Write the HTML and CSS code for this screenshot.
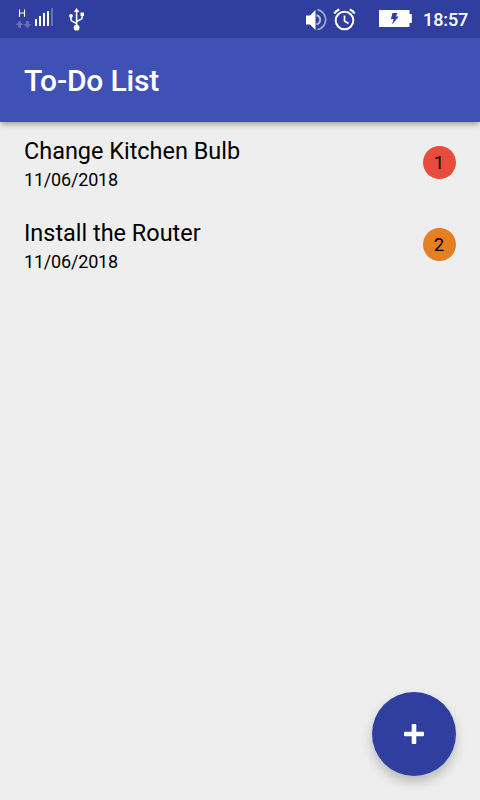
FILE: index.html
```html
<!DOCTYPE html>
<html lang="en">
<head>
<meta charset="utf-8">
<title>To-Do List</title>
<link rel="stylesheet" href="styles.css">
</head>
<body>
<div class="status">
  <svg class="signals" width="84" height="38" viewBox="0 0 84 38">
    <path d="M19.500 9.500v7.500M24.500 9.500v7.500M19.500 13h5" stroke="#fff" stroke-width="1.100" fill="none"/>
    <path d="M19.500 20.500l3.800 4.500h-2.300v3h-3v-3h-2.300zM27.300 28.500l-3.800-4.500h2.300v-3h3v3h2.300z" fill="#6570bb"/>
    <path d="M35 19h2v7h-2zM39 16h2v10h-2zM43 13h2v13h-2zM47 11h2v15h-2z" fill="#fff"/>
    <path d="M51 8h2v18h-2z" fill="#6570bb"/>
    <path d="M76.600 11v16M71 16v3.500q0 1 1 1.600l4.600 2.400M82.200 14.500v3q0 1-1 1.600l-4.600 2.400" stroke="#fff" stroke-width="1.600" fill="none"/>
    <path d="M76.600 8l2.800 4h-5.600zM80.500 12.500h3.500v3.500h-3.500z" fill="#fff"/>
    <circle cx="71" cy="15.800" r="1.900" fill="#fff"/><circle cx="76.600" cy="27.700" r="2.900" fill="#fff"/>
  </svg>
  <svg class="alerts" width="108" height="38" viewBox="305 0 108 38">
    <path d="M306 15.500h4l5.500-5.500v20l-5.500-5.500h-4z" fill="#fff"/>
    <path d="M316.500 15.200a4.800 4.800 0 0 1 0 9.300" fill="none" stroke="#b4bae0" stroke-width="2"/>
    <path d="M317.500 9.700a10.200 10.200 0 0 1 0 20" fill="none" stroke="#a4abd7" stroke-width="1.700"/>
    <circle cx="344.500" cy="20.500" r="8.800" fill="none" stroke="#fff" stroke-width="2"/>
    <path d="M344.500 15.500v5.500l4 2.500" fill="none" stroke="#fff" stroke-width="1.700"/>
    <path d="M334.300 13.500q1.500-2.500 5-3.900M349.700 9.600q3.500 1.400 5 3.900" stroke="#fff" stroke-width="2.200" fill="none"/>
    <path d="M379 10h30.500v4h2.300v9h-2.300v4H379z" fill="#fff"/>
    <path d="M392.500 13h5l-1.500 3.500h2.800l-6.800 8 1.600-5.500h-2.800z" fill="#303f9f"/>
  </svg>
  <span class="clock">18:57</span>
</div>
<header class="appbar"><h1>To-Do List</h1></header>
<main class="list">
  <div class="item">
    <div class="text"><div class="name">Change Kitchen Bulb</div><div class="date">11/06/2018</div></div>
    <span class="badge high">1</span>
  </div>
  <div class="item">
    <div class="text"><div class="name">Install the Router</div><div class="date">11/06/2018</div></div>
    <span class="badge medium">2</span>
  </div>
</main>
<button class="fab" aria-label="Add">
  <svg width="20" height="20" viewBox="0 0 20 20"><rect x="7.700" width="4.600" height="20" rx="1" fill="#fff"/><rect y="7.700" width="20" height="4.600" rx="1" fill="#fff"/></svg>
</button>
</body>
</html>
```
FILE: styles.css
```css
* { box-sizing: border-box; }
body {
  margin: 0;
  height: 800px;
  display: flex;
  flex-direction: column;
  overflow: hidden;
  background: #eee;
  color: #000;
  font-family: Roboto, "Liberation Sans", sans-serif;
}
.status {
  height: 38px;
  flex: none;
  display: flex;
  align-items: center;
  padding-right: 12px;
  background: #303f9f;
  color: #fff;
}
.signals, .alerts { display: block; flex: none; overflow: visible; }
.alerts { margin-left: auto; }
.clock {
  width: 55px;
  padding: 2px 0 0 10px;
  font-size: 18px;
  font-weight: 500;
  line-height: 38px;
  letter-spacing: -.1px;
}
.appbar {
  height: 84px;
  flex: none;
  display: flex;
  align-items: center;
  padding: 2px 24px 0;
  background: #3f51b5;
  color: #fff;
  box-shadow: 0 3px 6px -1px rgba(0, 0, 0, .38);
}
.appbar h1 {
  margin: 0;
  font-size: 30px;
  font-weight: 500;
  line-height: 36px;
  letter-spacing: -.17px;
}
.item {
  height: 82px;
  display: flex;
  align-items: center;
  justify-content: space-between;
  padding: 0 24px 1px;
  border-bottom: 1px solid #ececec;
}
.text { align-self: flex-start; padding-top: 14px; }
.name { font-size: 23.450px; line-height: 30px; }
.date { font-size: 18px; line-height: 28px; letter-spacing: -.18px; }
.badge {
  width: 33px;
  height: 33px;
  padding-right: 1px;
  border-radius: 50%;
  text-align: center;
  font-size: 18.500px;
  line-height: 35px;
}
.high { background: #e84c3d; }
.medium { background: #e67e22; }
.fab {
  position: absolute;
  right: 24px;
  bottom: 24px;
  width: 84px;
  height: 84px;
  padding: 0;
  border: 0;
  border-radius: 50%;
  display: flex;
  align-items: center;
  justify-content: center;
  background: #303f9f;
  box-shadow: 0 6px 11px rgba(0, 0, 0, .22);
}
```
